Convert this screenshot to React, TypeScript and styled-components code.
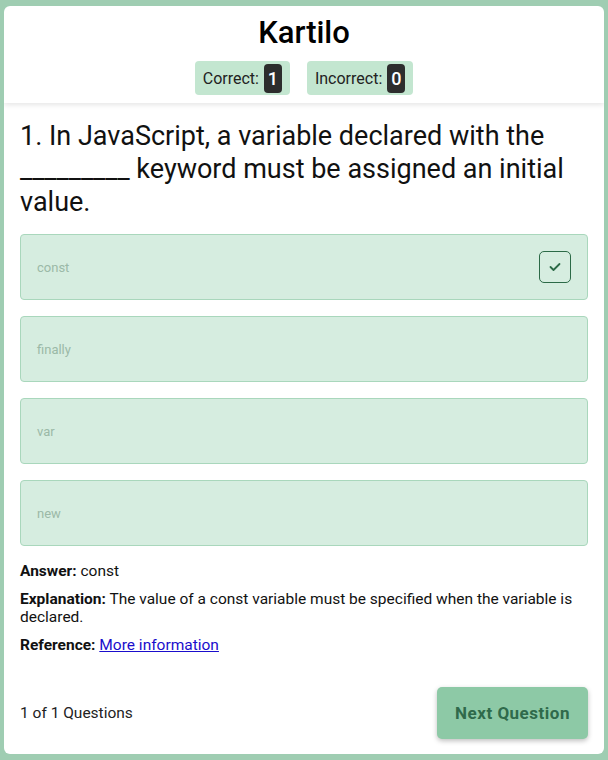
import React from "react";
import styled, { createGlobalStyle } from "styled-components";

const Global = createGlobalStyle`
  html, body { margin: 0; padding: 0; }
  body {
    background: #9fcdb2;
    font-family: Roboto, "Liberation Sans", sans-serif;
    color: #111;
  }
`;

const Page = styled.div`
  padding: 6px 4px 6px 4px;
  min-height: 760px;
  box-sizing: border-box;
`;

const Card = styled.div`
  background: #fff;
  border-radius: 6px;
  overflow: hidden;
  display: flex;
  flex-direction: column;
`;

const Header = styled.header`
  display: flex;
  flex-direction: column;
  align-items: center;
  padding: 8px 0 8px;
  box-shadow: 0 2px 5px rgba(0, 0, 0, 0.1);
  position: relative;
  z-index: 1;
`;

const Title = styled.h1`
  margin: 0;
  font-size: 31px;
  line-height: 38px;
  font-weight: 500;
  color: #000;
`;

const Scores = styled.div`
  display: flex;
  gap: 17px;
  margin-top: 9px;
`;

const Badge = styled.div`
  display: flex;
  align-items: center;
  gap: 5px;
  height: 34px;
  padding: 0 8px;
  border-radius: 4px;
  background: #c3e6d0;
  font-size: 16px;
  color: #222;
`;

const Count = styled.span`
  display: inline-flex;
  align-items: center;
  justify-content: center;
  min-width: 18px;
  height: 29px;
  border-radius: 4px;
  background: #2d2d2d;
  color: #fff;
  font-size: 18px;
  font-weight: 500;
`;

const Body = styled.main`
  padding: 17px 16px 15px;
  display: flex;
  flex-direction: column;
`;

const Question = styled.h2`
  margin: 0 0 15px;
  font-size: 27px;
  line-height: 33px;
  font-weight: 400;
  color: #111;
`;

const Options = styled.div`
  display: flex;
  flex-direction: column;
  gap: 16px;
`;

const Option = styled.div`
  height: 66px;
  box-sizing: border-box;
  display: flex;
  align-items: center;
  justify-content: space-between;
  padding: 0 16px;
  background: #d6ede0;
  border: 1px solid #a9d7bc;
  border-radius: 4px;
  font-size: 13px;
  color: #9bb9a7;
`;

const CheckBox = styled.div`
  width: 32px;
  height: 32px;
  box-sizing: border-box;
  border: 1.5px solid #2c6a47;
  border-radius: 5px;
  display: flex;
  align-items: center;
  justify-content: center;
`;

const Details = styled.div`
  margin-top: 16px;
  display: flex;
  flex-direction: column;
  gap: 10px;
`;

const Line = styled.p`
  margin: 0;
  font-size: 15.5px;
  line-height: 18px;
  color: #111;
  b { font-weight: 700; }
  a { color: #1a0dcc; text-decoration: underline; }
`;

const Footer = styled.div`
  margin-top: 33px;
  display: flex;
  align-items: center;
  justify-content: space-between;
`;

const Progress = styled.span`
  font-size: 15.5px;
  color: #222;
`;

const NextButton = styled.button`
  width: 151px;
  height: 52px;
  border: none;
  border-radius: 5px;
  background: #8dc9a6;
  color: #2f6a4b;
  font-family: Roboto, "Liberation Sans", sans-serif;
  font-size: 17px;
  font-weight: 700;
  letter-spacing: 0.5px;
  box-shadow: 0 2px 5px rgba(0, 0, 0, 0.25);
  cursor: pointer;
`;

const options = [
  { label: "const", checked: true },
  { label: "finally", checked: false },
  { label: "var", checked: false },
  { label: "new", checked: false },
];

export default function App() {
  return (
    <>
      <Global />
      <Page>
        <Card>
          <Header>
            <Title>Kartilo</Title>
            <Scores>
              <Badge>
                Correct: <Count>1</Count>
              </Badge>
              <Badge>
                Incorrect: <Count>0</Count>
              </Badge>
            </Scores>
          </Header>
          <Body>
            <Question>
              1. In JavaScript, a variable declared with the _________ keyword must be assigned an initial value.
            </Question>
            <Options>
              {options.map((o) => (
                <Option key={o.label}>
                  <span>{o.label}</span>
                  {o.checked && (
                    <CheckBox>
                      <svg width="12" height="10" viewBox="0 0 12 10">
                        <polyline
                          points="1.5,5 4.5,8 10.5,2"
                          fill="none"
                          stroke="#2c6a47"
                          strokeWidth="1.8"
                          strokeLinecap="round"
                          strokeLinejoin="round"
                        />
                      </svg>
                    </CheckBox>
                  )}
                </Option>
              ))}
            </Options>
            <Details>
              <Line>
                <b>Answer:</b> const
              </Line>
              <Line>
                <b>Explanation:</b> The value of a const variable must be specified when the variable is declared.
              </Line>
              <Line>
                <b>Reference:</b> <a href="#">More information</a>
              </Line>
            </Details>
            <Footer>
              <Progress>1 of 1 Questions</Progress>
              <NextButton>Next Question</NextButton>
            </Footer>
          </Body>
        </Card>
      </Page>
    </>
  );
}
